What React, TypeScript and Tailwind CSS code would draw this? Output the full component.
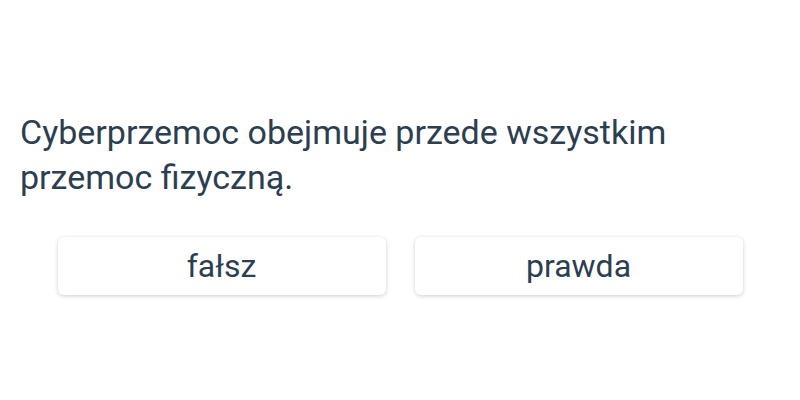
export default function App() {
  const answers = ["fałsz", "prawda"];

  return (
    <div className="w-[800px] h-[400px] bg-white text-[#2c3e50]" style={{ fontFamily: "Roboto, sans-serif" }}>
      <div className="pt-[110px] px-5">
        <p className="text-[34px] leading-[45px]">
          Cyberprzemoc obejmuje przede wszystkim przemoc fizyczną.
        </p>
      </div>
      <div className="flex justify-center gap-[29px] mt-[37px]">
        {answers.map((a) => (
          <button
            key={a}
            className="w-[328px] h-[58px] rounded-[6px] bg-white shadow-[0_1px_4px_rgba(0,0,0,0.2)] text-[32px] text-[#2c3e50]"
          >
            {a}
          </button>
        ))}
      </div>
    </div>
  );
}
